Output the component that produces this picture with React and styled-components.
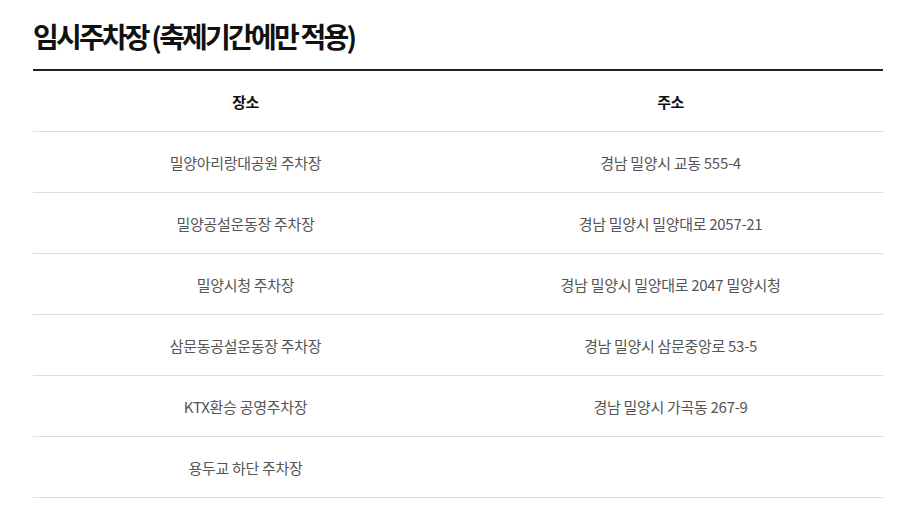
import React from "react";
import styled, { createGlobalStyle } from "styled-components";

const GlobalStyle = createGlobalStyle`
  html, body {
    margin: 0;
    padding: 0;
    background: #fff;
  }
  body {
    font-family: "Noto Sans CJK KR", "Noto Sans", sans-serif;
  }
`;

const Section = styled.section`
  width: 850px;
  padding: 17px 0 0 33px;
`;

const Title = styled.h2`
  margin: 0 0 14px;
  font-size: 28px;
  font-weight: 700;
  line-height: 38px;
  letter-spacing: -2.8px;
  color: #111;
`;

const Table = styled.table`
  width: 100%;
  border-collapse: collapse;
  table-layout: fixed;
  border-top: 2px solid #222;
`;

const Th = styled.th`
  height: 60px;
  padding: 0;
  font-size: 15px;
  font-weight: 700;
  color: #111;
  letter-spacing: -0.6px;
  text-align: center;
  border-bottom: 1px solid #dcdcdc;
`;

const Td = styled.td`
  height: 60px;
  padding: 0;
  font-size: 15px;
  font-weight: 400;
  color: #555;
  letter-spacing: -0.3px;
  text-align: center;
  border-bottom: 1px solid #dcdcdc;
`;

const parkings = [
  { place: "밀양아리랑대공원 주차장", addr: "경남 밀양시 교동 555-4" },
  { place: "밀양공설운동장 주차장", addr: "경남 밀양시 밀양대로 2057-21" },
  { place: "밀양시청 주차장", addr: "경남 밀양시 밀양대로 2047 밀양시청" },
  { place: "삼문동공설운동장 주차장", addr: "경남 밀양시 삼문중앙로 53-5" },
  { place: "KTX환승 공영주차장", addr: "경남 밀양시 가곡동 267-9" },
  { place: "용두교 하단 주차장", addr: "" },
];

export default function App() {
  return (
    <>
      <GlobalStyle />
      <Section>
        <Title>임시주차장 (축제기간에만 적용)</Title>
        <Table>
          <thead>
            <tr>
              <Th>장소</Th>
              <Th>주소</Th>
            </tr>
          </thead>
          <tbody>
            {parkings.map((p) => (
              <tr key={p.place}>
                <Td>{p.place}</Td>
                <Td>{p.addr}</Td>
              </tr>
            ))}
          </tbody>
        </Table>
      </Section>
    </>
  );
}
